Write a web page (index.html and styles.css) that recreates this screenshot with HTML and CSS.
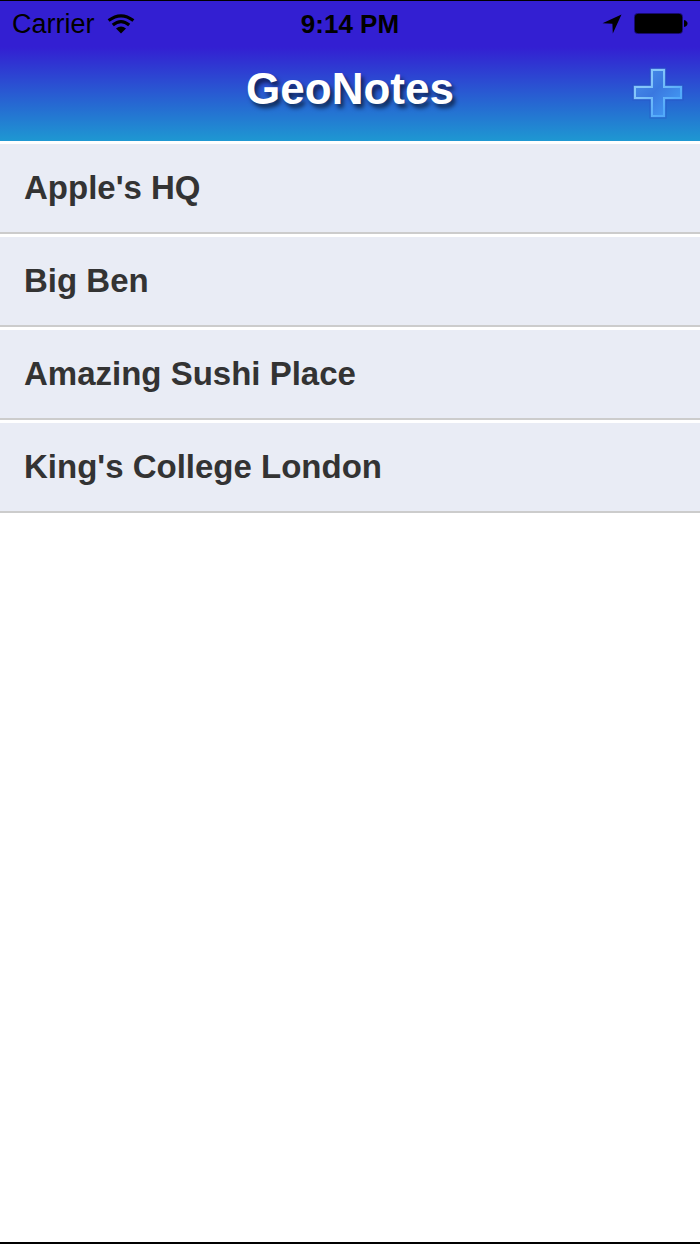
FILE: index.html
```html
<!DOCTYPE html>
<html lang="en">
<head>
  <meta charset="utf-8">
  <meta name="viewport" content="width=device-width, initial-scale=1">
  <title>GeoNotes</title>
  <link rel="stylesheet" href="styles.css">
</head>
<body class="screen">
  <header class="header">
    <div class="status">
      <div class="status-left">
        <span>Carrier</span>
        <svg class="wifi" viewBox="0 0 28 20" aria-hidden="true">
          <path d="M1.6 6.6Q14 -3 26.4 6.6" fill="none" stroke="#000" stroke-width="3.2"/>
          <path d="M5.8 11Q14 4.2 22.2 11" fill="none" stroke="#000" stroke-width="3.2"/>
          <path d="M9 14.6Q14 10.6 19 14.6L14 19.4Z"/>
        </svg>
      </div>
      <time class="clock">9:14 PM</time>
      <div class="status-right">
        <svg class="location" viewBox="0 0 20 20" aria-hidden="true">
          <path d="M19.5 0.5L10.8 19.5L10.4 9.8L0.5 9.2Z"/>
        </svg>
        <svg class="battery" viewBox="0 0 54 22" aria-hidden="true">
          <rect x="0.5" y="0.5" width="48" height="20" rx="3" fill="none" stroke="#170b70"/>
          <rect x="1" y="1" width="47" height="19" rx="2.5"/>
          <path d="M50 7Q53.5 8 53.5 10.5T50 14Z"/>
        </svg>
      </div>
    </div>
    <div class="navbar">
      <h1 class="title">GeoNotes</h1>
      <button class="add" type="button" aria-label="Add note">
        <svg class="plus" viewBox="0 0 52 52" aria-hidden="true">
          <defs>
            <linearGradient id="plus-fill" x1="0" y1="0" x2="1" y2="1">
              <stop offset="0" stop-color="#4a90ea"/>
              <stop offset="0.45" stop-color="#3a78e0"/>
              <stop offset="1" stop-color="#46a6fa"/>
            </linearGradient>
            <linearGradient id="plus-edge" x1="0" y1="0" x2="1" y2="1">
              <stop offset="0.3" stop-color="#84c6fa"/>
              <stop offset="0.75" stop-color="#52aafa"/>
            </linearGradient>
          </defs>
          <path d="M19 2H33V19H50V32H33V50H19V32H2V19H19Z" fill="none" stroke="#2450c0" stroke-opacity="0.5" stroke-width="3"/>
          <path d="M19.5 2.5H32.5V19.5H49.5V31.5H32.5V49.5H19.5V31.5H2.5V19.5H19.5Z" fill="url(#plus-fill)" stroke="url(#plus-edge)" stroke-opacity="0.4" stroke-width="2"/>
          <path d="M20 3H32V20H49V31H32V49H20V31H3V20H20Z" fill="none" stroke="url(#plus-edge)" stroke-width="2"/>
        </svg>
      </button>
    </div>
  </header>
  <main class="content">
    <ul class="notes">
      <li><a class="note" href="#apple">Apple's HQ</a></li>
      <li><a class="note" href="#big-ben">Big Ben</a></li>
      <li><a class="note" href="#sushi">Amazing Sushi Place</a></li>
      <li><a class="note" href="#kings">King's College London</a></li>
    </ul>
  </main>
</body>
</html>
```

FILE: styles.css
```css
* {
  box-sizing: border-box;
}

.screen {
  display: flex;
  flex-direction: column;
  min-height: 100vh;
  margin: 0;
  border-top: 1px solid #000;
  border-bottom: 2px solid #000;
  background: #fff;
  font-family: "Liberation Sans", Arial, sans-serif;
}

.header {
  background: linear-gradient(#331fd2 0, #331fd2 46px, #1e98d2 100%);
}

.status {
  display: grid;
  grid-template-columns: 1fr auto 1fr;
  align-items: center;
  height: 46px;
  padding: 0 12px;
  color: #000;
  font-size: 26px;
  line-height: 30px;
}

.status-left,
.status-right {
  display: flex;
  align-items: center;
  gap: 12px;
}

.status-left {
  font-size: 27px;
}

.status-right {
  justify-content: flex-end;
}

.clock {
  font-weight: bold;
}

.wifi {
  width: 28px;
  height: 20px;
}

.location {
  width: 20px;
  height: 20px;
}

.battery {
  width: 54px;
  height: 22px;
}

.navbar {
  display: grid;
  grid-template-columns: 1fr auto 1fr;
  align-items: center;
  height: 94px;
  padding: 0 16px 2px;
}

.title {
  grid-column: 2;
  margin: 0;
  padding-bottom: 8px;
  color: #fff;
  font-size: 44px;
  line-height: 52px;
  text-shadow: 3px 4px 4px rgba(0, 0, 0, 0.6);
}

.add {
  justify-self: end;
  padding: 0;
  border: 0;
  background: none;
  cursor: pointer;
}

.plus {
  display: block;
  width: 52px;
  height: 52px;
}

.content {
  flex: 1;
}

.notes {
  margin: 0;
  padding: 0;
  list-style: none;
}

.note {
  display: block;
  padding: 24px;
  border-top: 3px solid #fff;
  border-bottom: 2px solid #ccc;
  background: #e9ecf5;
  color: #333;
  font-size: 33px;
  font-weight: bold;
  line-height: 40px;
  text-decoration: none;
}
```
